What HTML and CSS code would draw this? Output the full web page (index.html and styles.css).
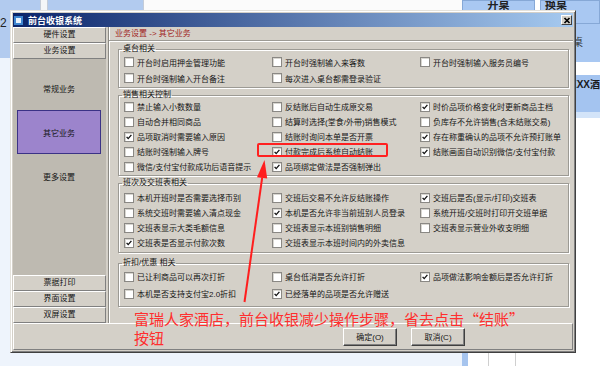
FILE: index.html
```html
<!DOCTYPE html>
<html lang="zh-CN">
  <head>
    <meta charset="UTF-8" />
    <title>前台收银系统</title>
    <link rel="stylesheet" href="styles.css">
  </head>
  <body>
    <div class="desk">
      <!-- cashier app behind the dialog -->
      <div class="app-left">
        <div class="app-head">
          <div class="tile tile-num">2</div>
          <div class="tile tile-gap"></div>
          <div class="tile tile-blue"></div>
          <div class="tile tile-white"></div>
        </div>
      </div>
      <div class="app-right">
        <div class="tool-row">
          <div class="tool-btn tool-open">开桌</div>
          <div class="tool-btn tool-swap">换桌</div>
        </div>
        <div class="app-grid">
          <div class="grid-stripe"></div>
          <div class="grid-col grid-col-a"></div>
          <div class="grid-col grid-col-b"></div>
          <div class="grid-col grid-col-c">
            <div class="cell cell-blue">桌</div>
            <div class="cell cell-gap"></div>
            <div class="cell cell-shop">XXX酒店</div>
            <div class="cell cell-band"></div>
          </div>
        </div>
      </div>

      <!-- settings dialog -->
      <div class="dialog">
        <div class="titlebar">
          <span class="title-icon"></span>
          <span class="title-text">前台收银系统</span>
          <span class="title-close">
            <svg viewBox="0 0 8 7" width="8" height="7"><path d="M1.5 1l5 5M6.5 1l-5 5" /></svg>
          </span>
        </div>

        <div class="dlg-body">
          <div class="nav">
            <div class="nav-btn">硬件设置</div>
            <div class="nav-btn">业务设置</div>
            <div class="nav-list">
              <div class="nav-item">常规业务</div>
              <div class="nav-item active">其它业务</div>
              <div class="nav-item">更多设置</div>
            </div>
            <div class="nav-btn">票据打印</div>
            <div class="nav-btn">界面设置</div>
            <div class="nav-btn">双屏设置</div>
          </div>

          <div class="content">
            <div class="crumb">业务设置 -&gt; 其它业务</div>
            <div class="panel">
              <fieldset class="group g1">
                <legend>桌台相关</legend>
                <div class="opts">
                  <label class="opt"><span class="cb"></span>开台时启用押金管理功能</label>
                  <label class="opt"><span class="cb"></span>开台时强制输入来客数</label>
                  <label class="opt"><span class="cb"></span>开台时强制输入服务员编号</label>
                  <label class="opt"><span class="cb"></span>开台时强制输入开台备注</label>
                  <label class="opt"><span class="cb"></span>每次进入桌台都需登录验证</label>
                </div>
              </fieldset>

              <fieldset class="group g2">
                <legend>销售相关控制</legend>
                <div class="opts">
                  <label class="opt"><span class="cb"></span>禁止输入小数数量</label>
                  <label class="opt"><span class="cb"></span>反结账后自动生成原交易</label>
                  <label class="opt"><span class="cb on"><svg viewBox="0 0 10 10"><path d="M2 4.8l2 2.2 4-4.6" /></svg></span>时价品项价格变化时更新商品主档</label>
                  <label class="opt"><span class="cb"></span>自动合并相同商品</label>
                  <label class="opt"><span class="cb"></span>结算时选择(堂食/外带)销售模式</label>
                  <label class="opt"><span class="cb"></span>负库存不允许销售(含未结账交易)</label>
                  <label class="opt"><span class="cb on"><svg viewBox="0 0 10 10"><path d="M2 4.8l2 2.2 4-4.6" /></svg></span>品项取消时需要输入原因</label>
                  <label class="opt"><span class="cb"></span>结账时询问本单是否开票</label>
                  <label class="opt"><span class="cb on"><svg viewBox="0 0 10 10"><path d="M2 4.8l2 2.2 4-4.6" /></svg></span>存在称重确认的品项不允许预打账单</label>
                  <label class="opt"><span class="cb"></span>结账时强制输入牌号</label>
                  <label class="opt"><span class="cb on"><svg viewBox="0 0 10 10"><path d="M2 4.8l2 2.2 4-4.6" /></svg></span>付款完成后系统自动结账</label>
                  <label class="opt"><span class="cb on"><svg viewBox="0 0 10 10"><path d="M2 4.8l2 2.2 4-4.6" /></svg></span>结账画面自动识别微信/支付宝付款</label>
                  <label class="opt"><span class="cb"></span>微信/支付宝付款成功后语音提示</label>
                  <label class="opt"><span class="cb on"><svg viewBox="0 0 10 10"><path d="M2 4.8l2 2.2 4-4.6" /></svg></span>品项绑定做法是否强制弹出</label>
                </div>
              </fieldset>

              <fieldset class="group g3">
                <legend>班次及交班表相关</legend>
                <div class="opts">
                  <label class="opt"><span class="cb"></span>本机开班时是否需要选择币别</label>
                  <label class="opt"><span class="cb"></span>交班后交易不允许反结账操作</label>
                  <label class="opt"><span class="cb on"><svg viewBox="0 0 10 10"><path d="M2 4.8l2 2.2 4-4.6" /></svg></span>交班后是否(显示/打印)交班表</label>
                  <label class="opt"><span class="cb"></span>系统交班时需要输入清点现金</label>
                  <label class="opt"><span class="cb on"><svg viewBox="0 0 10 10"><path d="M2 4.8l2 2.2 4-4.6" /></svg></span>本机是否允许非当前班别人员登录</label>
                  <label class="opt"><span class="cb"></span>系统开班/交班时打印开交班单据</label>
                  <label class="opt"><span class="cb"></span>交班表显示大类毛额信息</label>
                  <label class="opt"><span class="cb"></span>交班表显示本班别销售明细</label>
                  <label class="opt"><span class="cb"></span>交班表显示营业外收支明细</label>
                  <label class="opt"><span class="cb on"><svg viewBox="0 0 10 10"><path d="M2 4.8l2 2.2 4-4.6" /></svg></span>交班表是否显示付款次数</label>
                  <label class="opt"><span class="cb"></span>交班表显示本班时间内的外卖信息</label>
                </div>
              </fieldset>

              <fieldset class="group g4">
                <legend>折扣/优惠 相关</legend>
                <div class="opts">
                  <label class="opt"><span class="cb"></span>已让利商品可以再次打折</label>
                  <label class="opt"><span class="cb"></span>桌台低消是否允许打折</label>
                  <label class="opt"><span class="cb on"><svg viewBox="0 0 10 10"><path d="M2 4.8l2 2.2 4-4.6" /></svg></span>品项做法影响金额后是否允许打折</label>
                  <label class="opt"><span class="cb"></span>本机是否支持支付宝2.0折扣</label>
                  <label class="opt"><span class="cb on"><svg viewBox="0 0 10 10"><path d="M2 4.8l2 2.2 4-4.6" /></svg></span>已经落单的品项是否允许赠送</label>
                </div>
              </fieldset>
            </div>
          </div>
        </div>

        <div class="btn-bar">
          <button type="button" class="btn">确定(O)</button>
          <button type="button" class="btn">取消(C)</button>
        </div>
      </div>

      <!-- red annotation drawn over the screenshot -->
      <div class="mark"></div>
      <svg class="arrow" viewBox="0 0 34 150" width="34" height="150">
        <path class="arrow-line" d="M6.5 147L24.2 22.5" />
        <path class="arrow-head" d="M26.5 5L29.2 23.6L19 22.2Z" />
      </svg>
      <div class="note">富瑞人家酒店，前台收银减少操作步骤，省去点击“结账”<br />按钮</div>
    </div>
  </body>
</html>
```

FILE: styles.css
```css
/* Reset */
* {
  margin: 0;
  padding: 0;
  box-sizing: border-box;
}

body {
  width: 600px;
  height: 366px;
  overflow: hidden;
  font-family: "Liberation Sans", "Noto Sans CJK SC", sans-serif;
  color: #151515;
}

.desk {
  position: relative;
  width: 600px;
  height: 366px;
  display: flex;
  background: #eef4fc;
  overflow: hidden;
}

/* background app */
.app-left {
  flex: none;
  width: 462px;
  display: flex;
  flex-direction: column;
}

.app-head {
  display: flex;
  height: 58px;
}

.tile-num {
  width: 40px;
  background: #b2cbef;
  font-size: 12px;
  line-height: 14px;
  padding-top: 16px;
  color: #222;
}

.tile-gap {
  width: 8px;
  background: #f4f6f8;
  border-left: 1px solid #c4ccd8;
  border-right: 1px solid #c4ccd8;
}

.tile-blue {
  width: 95px;
  background: #b2cbef;
}

.tile-white {
  flex: 1;
  background: #fbfbfb;
  border-left: 1px solid #c4ccd8;
}

.app-right {
  flex: 1;
  min-width: 0;
  display: flex;
  flex-direction: column;
  background: #fff;
}

.tool-row {
  display: flex;
  gap: 5px;
  height: 24px;
  background: #fff;
}

.tool-btn {
  background: #a9c8f2;
  border: 1px solid #86a8d6;
  font-size: 11px;
  font-weight: bold;
  line-height: 8px;
  color: #222;
  white-space: nowrap;
  overflow: hidden;
}

.tool-open {
  width: 73px;
  text-align: center;
}

.tool-swap {
  flex: 1;
  padding-left: 4px;
}

.app-grid {
  flex: 1;
  display: flex;
}

.grid-stripe {
  width: 6px;
  background: #a6c4ee;
}

.grid-col {
  flex: none;
  border-right: 1px solid #cfcfcf;
}

.grid-col-a {
  width: 21px;
}

.grid-col-b {
  width: 27px;
}

.grid-col-c {
  flex: 1;
  min-width: 0;
  overflow: hidden;
  border-right: none;
  display: flex;
  flex-direction: column;
}

.cell-blue {
  height: 38px;
  background: #a9c8f2;
  font-size: 10px;
  line-height: 10px;
  padding: 14px 0 0 57px;
  color: #333;
}

.cell-gap {
  height: 13px;
}

.cell-shop {
  height: 37px;
  background: #a4c4f0;
  font-size: 10px;
  font-weight: bold;
  line-height: 12px;
  padding: 4px 0 0 54px;
  white-space: nowrap;
  color: #1a1a1a;
}

.cell-band {
  height: 6px;
  background: #d3e4f9;
}

/* dialog window */
.dialog {
  position: absolute;
  left: 10px;
  top: 10px;
  width: 566px;
  padding: 2px;
  background: #d4d0c8;
  border: 1px solid;
  border-color: #e4e2dc #404040 #404040 #e4e2dc;
  box-shadow: inset 1px 1px 0 #fff, inset -1px -1px 0 #808080;
}

.titlebar {
  height: 14px;
  display: flex;
  align-items: center;
  background: linear-gradient(90deg, #0a246a, #a6caf0);
}

.title-icon {
  width: 9px;
  height: 9px;
  margin-left: 1px;
  background: #e8f2fc;
  border: 2px solid #3f86d0;
}

.title-text {
  margin-left: 5px;
  font-size: 9px;
  font-weight: bold;
  color: #fff;
  font-family: "Noto Sans CJK SC", sans-serif;
}

.title-close {
  margin-left: auto;
  margin-right: 1px;
  width: 11px;
  height: 10px;
  display: flex;
  align-items: center;
  justify-content: center;
  background: #d4d0c8;
  border: 1px solid;
  border-color: #fff #404040 #404040 #fff;
}

.title-close svg {
  stroke: #000;
  stroke-width: 1.7;
}

.dlg-body {
  display: flex;
  gap: 2px;
  height: 296px;
}

/* left navigation */
.nav {
  width: 93px;
  display: flex;
  flex-direction: column;
}

.nav-btn {
  height: 16px;
  background: #d4d0c8;
  border: 1px solid;
  border-color: #fff #808080 #808080 #fff;
  font-size: 8px;
  line-height: 14px;
  text-align: center;
  color: #151515;
}

.nav-list {
  flex: 1;
  background: #bebab1;
  padding-top: 7px;
}

.nav-item {
  height: 44px;
  margin: 0 5px 0 4px;
  display: flex;
  align-items: center;
  justify-content: center;
  font-size: 8px;
  color: #151515;
}

.nav-item.active {
  background: #9c84cc;
  border: 1px solid #3b3286;
}

/* right content */
.content {
  flex: 1;
  display: flex;
  flex-direction: column;
  border-left: 1px solid #8c8a84;
  box-shadow: inset 1px 0 0 #fff;
}

.crumb {
  height: 13px;
  padding-left: 6px;
  font-size: 8px;
  line-height: 13px;
  color: #a02222;
}

.panel {
  flex: 1;
  display: flex;
  flex-direction: column;
  gap: 2px;
  padding: 3px 4px 0 9px;
  border-top: 1px solid #9c9a94;
  box-shadow: inset 0 1px 0 #fff;
}

.group {
  border: 1px solid #9c9a94;
  box-shadow: inset 1px 1px 0 #fff, 1px 1px 0 #fff;
  min-width: 0;
}

.group legend {
  margin-left: 3px;
  padding: 0 1px;
  font-size: 8px;
  line-height: 10px;
  color: #151515;
}

.opts {
  display: grid;
  grid-template-columns: 148px 148px auto;
  padding-left: 5px;
}

.opt {
  display: flex;
  align-items: center;
  gap: 3px;
  height: 15px;
  font-size: 8px;
  white-space: nowrap;
  color: #151515;
}

.g1 {
  padding-bottom: 1px;
}

.g1 .opt {
  height: 16px;
}

.g2 {
  padding-bottom: 1px;
}

.g2 .opts {
  margin-top: -1px;
}

.g3 {
  padding-bottom: 2px;
}

.g3 .opts {
  padding-top: 2px;
}

.g4 {
  margin-top: 3px;
  padding-bottom: 4px;
}

.g4 .opt {
  height: 17px;
}

.cb {
  flex: none;
  width: 10px;
  height: 10px;
  background: #fff;
  border: 1px solid #8a8884;
  box-shadow: inset 1px 1px 0 #d8d6d0;
  display: flex;
}

.cb svg {
  width: 8px;
  height: 8px;
  fill: none;
  stroke: #111;
  stroke-width: 1.7;
}

/* bottom buttons */
.btn-bar {
  height: 27px;
  display: flex;
  align-items: center;
  gap: 14px;
  padding-left: 329px;
  border: 1px solid;
  border-color: #fff #808080 #808080 #fff;
}

.btn {
  width: 54px;
  height: 18px;
  background: #d4d0c8;
  border: 1px solid;
  border-color: #fff #404040 #404040 #fff;
  box-shadow: inset -1px -1px 0 #808080;
  font-family: "Liberation Sans", "Noto Sans CJK SC", sans-serif;
  font-size: 8px;
  color: #151515;
}

/* red annotation */
.mark {
  position: absolute;
  left: 257px;
  top: 143px;
  width: 131px;
  height: 14px;
  border: 2px solid #ff2020;
  border-radius: 2px;
}

.arrow {
  position: absolute;
  left: 238px;
  top: 155px;
}

.arrow-line {
  stroke: #ff1e1e;
  stroke-width: 2;
  fill: none;
}

.arrow-head {
  fill: #ff1e1e;
}

.note {
  position: absolute;
  left: 134px;
  top: 309px;
  font-family: "Noto Sans CJK SC", sans-serif;
  font-size: 15px;
  line-height: 19px;
  color: #ff2e2e;
  white-space: nowrap;
}
```
